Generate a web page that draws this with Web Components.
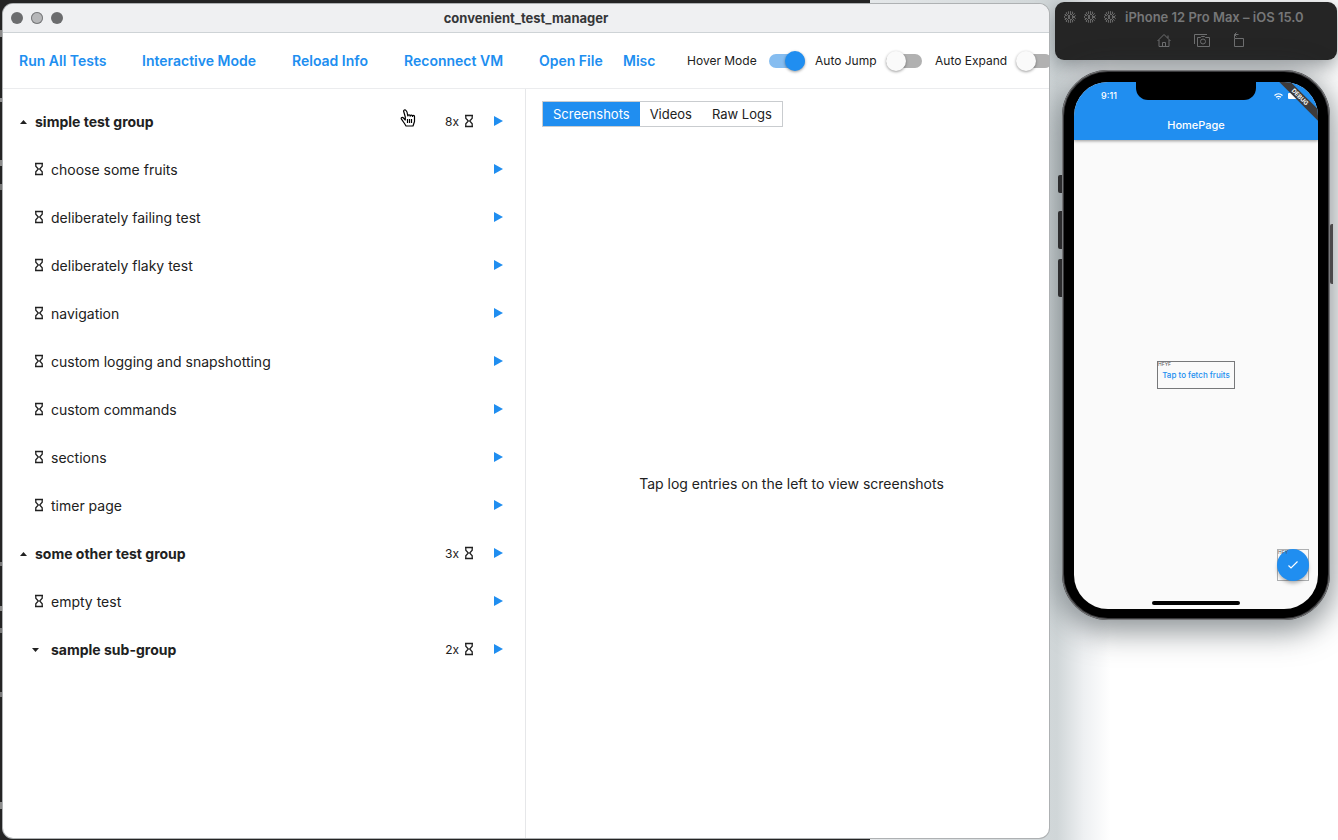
<!DOCTYPE html>
<html lang="en">
<head>
<meta charset="utf-8">
<title>convenient_test_manager</title>
<style>
  html, body { margin: 0; height: 100%; }
  body { font-family: Inter, "Liberation Sans", sans-serif; color: #212121; --blue: #208ef0; }
</style>
</head>
<body>
<desk-top>
  <manager-window slot="main" heading="convenient_test_manager">
    <tool-bar slot="toolbar"></tool-bar>
    <test-list slot="left">
      <test-row kind="group" label="simple test group" count="8x" open></test-row>
      <test-row label="choose some fruits"></test-row>
      <test-row label="deliberately failing test"></test-row>
      <test-row label="deliberately flaky test"></test-row>
      <test-row label="navigation"></test-row>
      <test-row label="custom logging and snapshotting"></test-row>
      <test-row label="custom commands"></test-row>
      <test-row label="sections"></test-row>
      <test-row label="timer page"></test-row>
      <test-row kind="group" label="some other test group" count="3x" open></test-row>
      <test-row label="empty test"></test-row>
      <test-row kind="group" nested label="sample sub-group" count="2x"></test-row>
    </test-list>
    <detail-pane slot="right">Tap log entries on the left to view screenshots</detail-pane>
  </manager-window>
  <sim-panel slot="side">
    <sim-phone></sim-phone>
  </sim-panel>
  <hand-cursor slot="pointer"></hand-cursor>
</desk-top>

<script>
const define = (name, html) => customElements.define(name, class extends HTMLElement {
  constructor() {
    super();
    this.attachShadow({ mode: 'open' });
  }
  connectedCallback() {
    if (this.shadowRoot.childNodes.length) return;
    const t = document.createElement('template');
    t.innerHTML = typeof html === 'function' ? html(this) : html;
    this.shadowRoot.append(t.content.cloneNode(true));
  }
});

define('desk-top', `
<style>
  :host { display: flex; gap: 6px; box-sizing: border-box; min-height: 100vh; padding: 2px 1px 2px 3px;
    position: relative; overflow: hidden;
    background: linear-gradient(to right, #242424 65%, #e4e7e9 65%, #d0d6d8 79%, #eef0f2 81%, #fff 83%); }
  .edge { position: absolute; left: 0; top: 0; bottom: 0; width: 3px;
    background:
      linear-gradient(#8b8b8b, #8b8b8b) 0 30px / 2px 7px no-repeat,
      linear-gradient(#8b8b8b, #8b8b8b) 0 98px / 3px 4px no-repeat,
      linear-gradient(#8b8b8b, #8b8b8b) 0 160px / 2px 6px no-repeat,
      linear-gradient(#777, #777) 0 184px / 2px 6px no-repeat,
      linear-gradient(#777, #777) 0 562px / 2px 4px no-repeat,
      linear-gradient(#8b8b8b, #8b8b8b) 0 606px / 2px 5px no-repeat,
      linear-gradient(#777, #777) 0 628px / 2px 5px no-repeat,
      linear-gradient(#777, #777) 0 692px / 2px 5px no-repeat,
      linear-gradient(#8b8b8b, #8b8b8b) 0 802px / 2px 7px no-repeat; }
  ::slotted([slot=main]) { flex: 1; min-width: 0; margin-top: 2px; z-index: 1; }
  ::slotted([slot=side]) { flex: 0 0 282px; }
</style>
<div class="edge"></div>
<slot name="main"></slot><slot name="side"></slot><slot name="pointer"></slot>`);

define('manager-window', el => `
<style>
  :host { display: flex; flex-direction: column; background: #fff; border-radius: 10px; overflow: hidden;
    position: relative; box-shadow: 0 0 0 1px #aeb1b3; }
  header { display: grid; grid-template-columns: 1fr auto 1fr; align-items: center; height: 28px;
    background: #eff0f2; border-bottom: 1px solid #ced3d6; }
  .lights { display: flex; gap: 8px; padding-left: 8px; }
  .lights i { width: 12px; height: 12px; border-radius: 50%; background: #6b6c6e; }
  .lights i:nth-child(2) { background: #b6b7b9; box-shadow: inset 0 0 0 1px #77787a; }
  h1 { margin: 0; font-size: 13px; font-weight: 700; line-height: 16px; color: #353638; }
  main { flex: 1; display: grid; grid-template-columns: 1fr 1fr; min-height: 0; }
</style>
<header><div class="lights"><i></i><i></i><i></i></div><h1>${el.getAttribute('heading')}</h1></header>
<slot name="toolbar"></slot>
<main><slot name="left"></slot><slot name="right"></slot></main>`);

define('tool-bar', `
<style>
  :host { display: flex; align-items: center; height: 55px; border-bottom: 1px solid #ebecee;
    padding-left: 16px; overflow: hidden; }
  nav { display: grid; flex: none; grid-template-columns: 123px 150px 112px 135px 84px 64px; }
  button { border: 0; padding: 0; background: none; font: 600 14px/20px Inter, sans-serif; color: var(--blue);
    text-align: left; white-space: nowrap; }
  .switches { display: grid; flex: none; grid-template-columns: 128px 120px 130px; }
</style>
<nav><button>Run All Tests</button><button>Interactive Mode</button><button>Reload Info</button><button>Reconnect VM</button><button>Open File</button><button>Misc</button></nav>
<div class="switches"><toggle-switch on>Hover Mode</toggle-switch><toggle-switch>Auto Jump</toggle-switch><toggle-switch>Auto Expand</toggle-switch></div>`);

define('toggle-switch', el => `
<style>
  :host { display: block; }
  label { display: flex; align-items: center; justify-content: space-between; font-size: 12px; line-height: 20px;
    white-space: nowrap; padding-right: 10px; }
  :host(:not([on])) label { padding-right: 13px; }
  input { appearance: none; margin: 0; width: 36px; height: 14px; border-radius: 7px; background: #b1b1b1;
    display: flex; align-items: center; }
  input::before { content: ""; width: 20px; height: 20px; flex: none; border-radius: 50%; background: #fafafa;
    box-shadow: 0 1px 3px rgba(0,0,0,.4); }
  input:checked { background: #86bdf0; justify-content: flex-end; }
  input:checked::before { background: var(--blue); }
</style>
<label><slot></slot><input type="checkbox" role="switch" aria-label="${el.textContent}" ${el.hasAttribute('on') ? 'checked' : ''}></label>`);

define('test-list', `
<style>
  :host { display: block; box-sizing: border-box; border-right: 1px solid #e6e7e9; padding-top: 9px; }
</style>
<slot></slot>`);

define('hour-glass', `
<style>:host { display: block; width: 10px; height: 14px; padding-bottom: 2px; } svg { display: block; }</style>
<svg width="10" height="14" viewBox="0 0 10 14" fill="none" stroke="#212121" stroke-width="1.3"><path d="M1 1.5h8M1 12.500h8M1.800 1.500v2.700L4.300 7 1.800 9.800v2.700M8.200 1.500v2.700L5.700 7l2.500 2.800v2.700"/></svg>`);

define('test-row', el => {
  const group = el.getAttribute('kind') === 'group';
  const label = el.getAttribute('label');
  const arrow = el.hasAttribute('open') ? 'M0 4 3.500 0 7 4z' : 'M0 0h7L3.500 4z';
  return `
<style>
  :host { display: flex; align-items: center; height: 48px; padding: 0 22px 0 16px; }
  :host([nested]) { padding-left: 28px; }
  .name { flex: 1; display: flex; align-items: center; gap: 8px; border: 0; background: none; padding: 0 0 0 1px;
    font: 400 14px/20px Inter, sans-serif; color: #212121; text-align: left; }
  :host([nested]) .name { gap: 12px; }
  .name.group { font-weight: 700; }
  :host(:not([kind])) .name { padding-left: 15px; gap: 7px; }
  .lead { flex: none; display: flex; }
  .count { font-size: 12px; line-height: 20px; margin-right: 5px; }
  .run { border: 0; background: none; padding: 0 0 2px; display: flex; margin-left: 20px; }
</style>
<button class="name ${group ? 'group' : ''}"><span class="lead">${group ? `<svg width="7" height="4" viewBox="0 0 7 4" fill="#212121"><path d="${arrow}"/></svg>` : '<hour-glass></hour-glass>'}</span>${label}</button>
${group ? `<span class="count">${el.getAttribute('count')}</span><hour-glass></hour-glass>` : ''}
<button class="run" aria-label="Run ${label}"><svg width="9" height="10" viewBox="0 0 9 10" fill="#208ef0"><path d="M0 0l9 5-9 5z"/></svg></button>`;
});

define('detail-pane', `
<style>
  :host { display: flex; flex-direction: column; padding-left: 8px; }
  .tabs { display: flex; padding: 12px 8px 3px; }
  .set { display: flex; border: 1px solid #c9cccf; }
  button { border: 0; background: #fff; color: #212121; padding: 2px 10px; font: 400 13px/20px Inter, sans-serif; }
  button[aria-selected=true] { background: var(--blue); color: #fff; }
  p { flex: 1; display: flex; align-items: center; justify-content: center; margin: 0; font-size: 14px; line-height: 20px; }
</style>
<div class="tabs"><div class="set" role="tablist"><button role="tab" aria-selected="true">Screenshots</button><button role="tab">Videos</button><button role="tab">Raw Logs</button></div></div>
<p><slot></slot></p>`);

define('sim-panel', `
<style>
  :host { display: flex; flex-direction: column; align-items: center; gap: 10px; position: relative; }
  header { align-self: stretch; height: 58px; border-radius: 9px; background: #252525; box-sizing: border-box;
    box-shadow: 0 6px 20px rgba(60,70,75,.55); padding-top: 5px; color: #767778; }
  .title { display: flex; align-items: center; padding-left: 9px; }
  .title i { width: 12px; height: 12px; margin-right: 8px; border-radius: 50%; background: repeating-conic-gradient(#666 0 12deg, #2a2a2a 12deg 24deg); }
  h2 { margin: 0 0 0 1px; font-size: 13px; font-weight: 600; line-height: 20px; white-space: nowrap; }
  .actions { display: flex; justify-content: center; gap: 20px; margin-top: 4px; padding-left: 12px; }
  button { border: 0; background: none; padding: 0; display: flex; }
</style>
<header>
  <div class="title"><i></i><i></i><i></i><h2>iPhone 12 Pro Max – iOS 15.0</h2></div>
  <div class="actions">
    <button aria-label="Home"><svg width="18" height="18" viewBox="0 0 18 18" fill="none" stroke="#6e6f70"><path d="M2.500 10 9 3.500 15.500 10M4 9v6.500h10V9M7.500 15.500v-4h3v4M13 7V4.500"/></svg></button>
    <button aria-label="Screenshot"><svg width="18" height="18" viewBox="0 0 18 18" fill="none" stroke="#6e6f70"><path d="M1.500 13V3.500H14M4.500 6.500h3l1-1h3l1 1h4v9h-12z"/><circle cx="10" cy="10.500" r="2.500"/></svg></button>
    <button aria-label="Rotate"><svg width="18" height="18" viewBox="0 0 18 18" fill="none" stroke="#6e6f70"><path d="M3.500 7.500h9v8h-9zM3.500 7V3.500h4M5.500 1.500l-2 2 2 2"/></svg></button>
  </div>
</header>
<slot></slot>`);

define('sim-phone', `
<style>
  :host { display: block; position: relative; box-sizing: border-box; width: 268px; height: 550px; padding: 10px 10px 9px;
    background: #000; border: 2px solid #3a3a3c; outline: 1px solid #77787a; outline-offset: -1px;
    border-radius: 46px; box-shadow: 0 8px 30px 4px rgba(50,60,65,.55); }
  .key { position: absolute; width: 4px; left: -6px; background: #2c2c2e; border-radius: 2px 0 0 2px; }
  .mute { top: 103px; height: 18px; } .up { top: 139px; height: 38px; } .down { top: 187px; height: 38px; }
  .power { left: auto; right: -5px; top: 152px; height: 60px; width: 3px; background: #4b494a; }
  .screen { position: relative; height: 100%; border-radius: 34px; overflow: hidden; background: #fafafa;
    display: flex; flex-direction: column; }
  .bar { height: 58px; flex: none; background: var(--blue); color: #fff; box-shadow: 0 1px 3px rgba(0,0,0,.4); }
  .status { display: flex; align-items: center; justify-content: space-between; height: 28px; padding: 0 16px 0 27px;
    font-size: 9px; font-weight: 500; line-height: 12px; }
  .icons { display: flex; align-items: center; gap: 5px; }
  .bat { width: 14px; height: 6px; border-radius: 1px; background: #fff; }
  h3 { margin: 5px 0 0; font-size: 11px; line-height: 20px; font-weight: 500; text-align: center; }
  .notch { position: absolute; top: 0; left: 62px; right: 62px; height: 18px; background: #000; border-radius: 0 0 12px 12px; }
  .ribbon { position: absolute; top: 11px; right: -17px; width: 70px; transform: rotate(45deg); background: #3d3a3a; color: #fff;
    font-size: 6px; font-weight: 700; line-height: 8px; text-align: center; }
  .body { flex: 1; display: flex; align-items: center; justify-content: center; }
  .mark { position: relative; border: 1px solid #77787a; box-sizing: border-box; }
  .mark small { position: absolute; left: 0; top: 0; font-size: 5px; line-height: 5px; color: #555; }
  .fetch { width: 78px; height: 28px; display: flex; align-items: center; justify-content: center; }
  button { border: 0; background: none; padding: 0; color: var(--blue); font: 500 8px/12px Inter, sans-serif; white-space: nowrap; }
  .corner { position: absolute; right: 9px; bottom: 28px; width: 32px; height: 32px; border-color: #aeb0b2; }
  .fab { display: flex; align-items: center; justify-content: center; width: 30px; height: 30px; border-radius: 50%;
    background: var(--blue); box-shadow: 0 0 0 1px var(--blue), 0 3px 4px rgba(0,0,0,.35); }
  .home { position: absolute; left: 78px; right: 78px; bottom: 4px; height: 4px; border-radius: 2px; background: #000; }
</style>
<span class="key mute"></span><span class="key up"></span><span class="key down"></span><span class="key power"></span>
<div class="screen">
  <div class="bar">
    <div class="status"><span>9:11</span><span class="icons"><svg width="9" height="7" viewBox="0 0 9 7" fill="none" stroke="#fff" stroke-width="1.200"><path d="M.5 2.500a6 6 0 0 1 8 0M2 4.300a4 4 0 0 1 5 0"/><path d="M3.300 5.300h2.400L4.500 6.800z" fill="#fff" stroke="none"/></svg><i class="bat"></i></span></div>
    <h3>HomePage</h3>
  </div>
  <div class="body"><div class="mark fetch"><small>HFYF</small><button>Tap to fetch fruits</button></div></div>
  <div class="mark corner"><button class="fab" aria-label="Done"><svg width="12" height="10" viewBox="0 0 12 10" fill="none" stroke="#fff" stroke-width="1.200"><path d="M1.500 5.500l2.500 2.500 6.500-6.500"/></svg></button><small>HFY</small></div>
  <div class="notch"></div>
  <div class="ribbon">DEBUG</div>
  <div class="home"></div>
</div>`);

define('hand-cursor', `
<style>:host { display: block; position: absolute; left: 400px; top: 109px; z-index: 2; } svg { display: block; }</style>
<svg width="16" height="18" viewBox="0 0 16 18" fill="#fff" stroke="#000" stroke-width="1.200" stroke-linejoin="round"><path d="M5.300 11 3.500 9C2.500 8 .8 8.600 1.300 9.800L4.500 14.500 6 17h7l1.500-4.500V7.500c0-1.400-1.800-1.400-2 0 0-1.700-2.100-1.900-2.300-.3 0-1.700-2.200-1.800-2.400-.2L7 3 6 1.500C5 .2 3.300 1.200 3.700 2.500L5.300 8z"/><path d="M7.500 10v4M9.500 10v4M11.500 10v4" fill="none"/></svg>`);
</script>
</body>
</html>
